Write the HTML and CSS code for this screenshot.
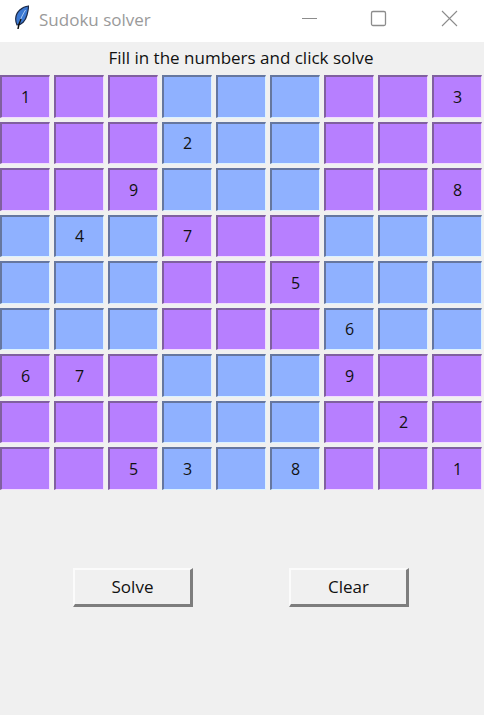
FILE: index.html
```html
<!DOCTYPE html>
<html lang="en">

<head>
    <meta charset="UTF-8">
    <title>Sudoku solver</title>
    <link rel="stylesheet" href="styles.css">
</head>

<body>
    <div class="titlebar">
        <svg class="feather" width="14" height="42" viewBox="0 0 14 42">
            <path d="M13.500 6 C7 6.500 1 12 .7 18.500 C.6 21 1 23 2 25 C6.500 25 10.500 21 12 15 C13 11.500 13.500 8.500 13.500 6 Z" fill="#3b78d2" stroke="#1c2a48" stroke-width="1.200"/>
            <path d="M10.500 10 C8 14 6 18 4.500 22" fill="none" stroke="#a9c8f2" stroke-width="1"/>
            <path d="M6 19 C4.500 22 3.500 25.500 3 29" fill="none" stroke="#111" stroke-width="1.500"/>
        </svg>
        <span class="app-title">Sudoku solver</span>
        <div class="win-controls">
            <svg width="70" height="42" viewBox="0 0 70 42"><path d="M8 18.500 H23" stroke="#8c8c8c" stroke-width="1"/></svg>
            <svg width="70" height="42" viewBox="0 0 70 42"><rect x="7.500" y="11.500" width="14" height="14" rx="1.500" fill="none" stroke="#8c8c8c" stroke-width="1.300"/></svg>
            <svg width="50" height="42" viewBox="0 0 50 42"><path d="M8 11 L23 26 M23 11 L8 26" stroke="#8c8c8c" stroke-width="1.100"/></svg>
        </div>
    </div>

    <p class="hint">Fill in the numbers and click solve</p>

    <div class="board">
        <div class="cell p">1</div><div class="cell p"></div><div class="cell p"></div><div class="cell b"></div><div class="cell b"></div><div class="cell b"></div><div class="cell p"></div><div class="cell p"></div><div class="cell p">3</div>
        <div class="cell p"></div><div class="cell p"></div><div class="cell p"></div><div class="cell b">2</div><div class="cell b"></div><div class="cell b"></div><div class="cell p"></div><div class="cell p"></div><div class="cell p"></div>
        <div class="cell p"></div><div class="cell p"></div><div class="cell p">9</div><div class="cell b"></div><div class="cell b"></div><div class="cell b"></div><div class="cell p"></div><div class="cell p"></div><div class="cell p">8</div>

        <div class="cell b"></div><div class="cell b">4</div><div class="cell b"></div><div class="cell p">7</div><div class="cell p"></div><div class="cell p"></div><div class="cell b"></div><div class="cell b"></div><div class="cell b"></div>
        <div class="cell b"></div><div class="cell b"></div><div class="cell b"></div><div class="cell p"></div><div class="cell p"></div><div class="cell p">5</div><div class="cell b"></div><div class="cell b"></div><div class="cell b"></div>
        <div class="cell b"></div><div class="cell b"></div><div class="cell b"></div><div class="cell p"></div><div class="cell p"></div><div class="cell p"></div><div class="cell b">6</div><div class="cell b"></div><div class="cell b"></div>

        <div class="cell p">6</div><div class="cell p">7</div><div class="cell p"></div><div class="cell b"></div><div class="cell b"></div><div class="cell b"></div><div class="cell p">9</div><div class="cell p"></div><div class="cell p"></div>
        <div class="cell p"></div><div class="cell p"></div><div class="cell p"></div><div class="cell b"></div><div class="cell b"></div><div class="cell b"></div><div class="cell p"></div><div class="cell p">2</div><div class="cell p"></div>
        <div class="cell p"></div><div class="cell p"></div><div class="cell p">5</div><div class="cell b">3</div><div class="cell b"></div><div class="cell b">8</div><div class="cell p"></div><div class="cell p"></div><div class="cell p">1</div>
    </div>

    <div class="actions">
        <button class="btn">Solve</button>
        <button class="btn">Clear</button>
    </div>
</body>

</html>
```

FILE: styles.css
```css
* {
    box-sizing: border-box;
}

body {
    margin: 0;
    height: 715px;
    background: #f0f0f0;
    font-family: "Open Sans", "Noto Sans", sans-serif;
    font-size: 17px;
    color: #111;
    overflow: hidden;
}

.titlebar {
    height: 42px;
    background: #fff;
    display: flex;
    align-items: center;
    padding-left: 15px;
}

.feather {
    flex: none;
}

.app-title {
    margin-left: 10px;
    padding-bottom: 3px;
    color: #9a9a9a;
    font-size: 17px;
}

.win-controls {
    margin-left: auto;
    display: flex;
}

.hint {
    margin: 0;
    height: 33px;
    line-height: 32px;
    text-align: center;
    width: 482px;
}

.board {
    display: grid;
    grid-template-columns: repeat(9, 50px);
    grid-auto-rows: 42.500px;
    gap: 4px;
}

.cell {
    display: flex;
    align-items: center;
    justify-content: center;
    border-style: solid;
    border-width: 2px 1px 1px 2px;
    font-size: 16px;
}

.p {
    background: #b77fff;
    border-color: #80609f #f3dcff #f3dcff #80609f;
}

.b {
    background: #8fb1ff;
    border-color: #66779f #dcf2ff #dcf2ff #66779f;
}

.actions {
    display: flex;
    gap: 96px;
    padding-left: 73px;
    margin-top: 78px;
}

.btn {
    width: 120px;
    height: 39px;
    background: #f0f0f0;
    border-style: solid;
    border-width: 2px 3px 3px 2px;
    border-color: #fbfbfb #7d7d7d #7d7d7d #fbfbfb;
    font-family: inherit;
    font-size: 17px;
    color: #111;
    padding: 0;
}
```
